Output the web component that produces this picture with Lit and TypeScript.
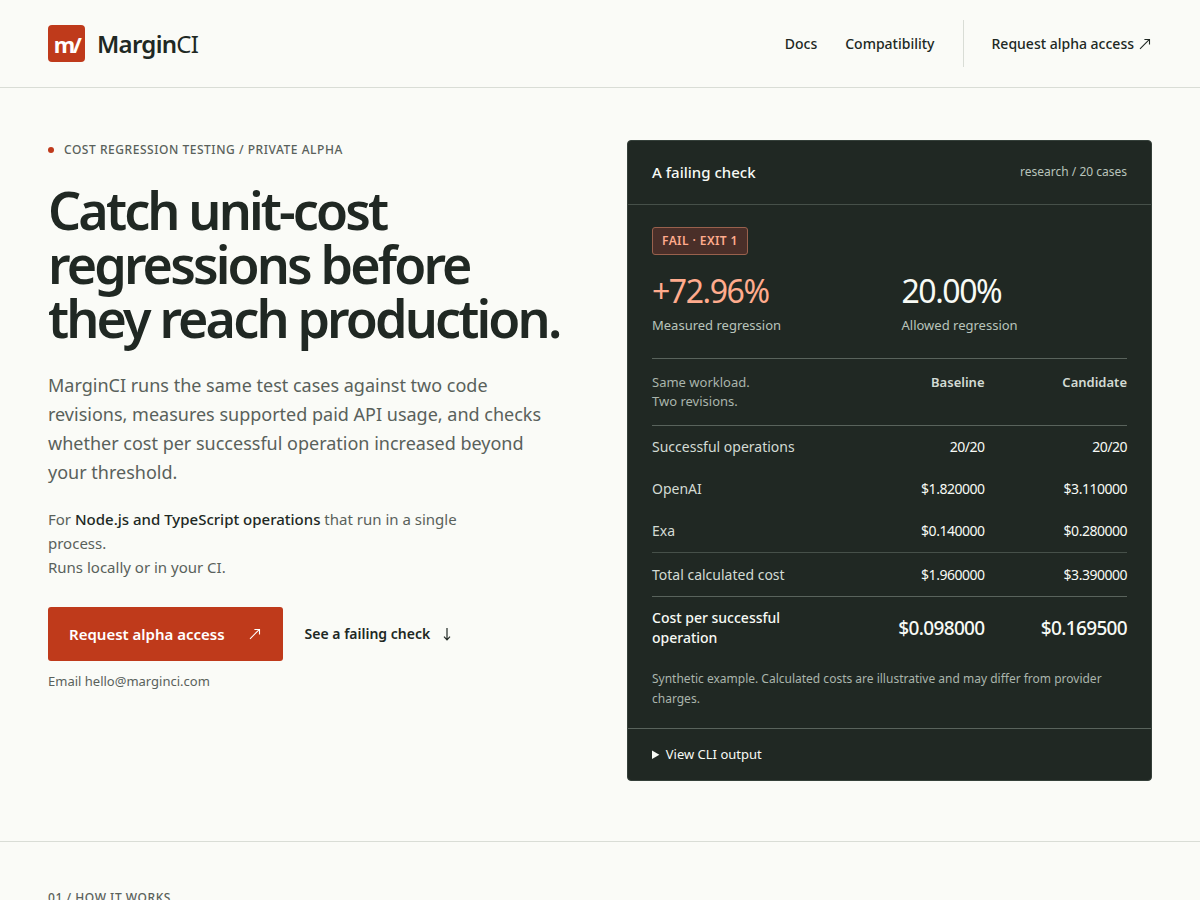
import { LitElement, html, css } from "lit";
import { customElement, property } from "lit/decorators.js";

interface CostRow {
  label: string;
  baseline: string;
  candidate: string;
  kind: "plain" | "total" | "result";
}

const arrowOut = html`
  <svg class="arrow" width="13" height="12" viewBox="0 0 13 12" fill="none" stroke="currentColor" stroke-width="1.1" aria-hidden="true">
    <path d="M1 10.8 L10.4 1.4 M5.4 1.5 H10.5 V6.6" />
  </svg>
`;

const arrowDown = html`
  <svg class="arrow" width="10" height="14" viewBox="0 0 10 14" fill="none" stroke="currentColor" stroke-width="1.2" aria-hidden="true">
    <path d="M5 1 V12.6 M2 9.6 L5 12.8 L8 9.6" />
  </svg>
`;

@customElement("site-header")
export class SiteHeader extends LitElement {
  static styles = css`
    :host {
      display: block;
      border-bottom: 1px solid #d9ddd6;
    }
    .bar {
      display: flex;
      align-items: center;
      justify-content: space-between;
      padding: 20px 48px;
    }
    a {
      color: inherit;
      text-decoration: none;
    }
    .brand {
      display: flex;
      align-items: center;
      gap: 12px;
      font-size: 24px;
      line-height: 32px;
      letter-spacing: -0.03em;
    }
    .mark {
      display: grid;
      place-items: center;
      width: 37px;
      height: 37px;
      border-radius: 4px;
      background: #bf3a1b;
      color: #fff;
      font-size: 22px;
      font-weight: 700;
      letter-spacing: -0.12em;
    }
    .name {
      font-weight: 600;
    }
    .name span {
      font-weight: 400;
    }
    nav {
      display: flex;
      align-items: center;
      gap: 28px;
      font-size: 14px;
      line-height: 23px;
      font-weight: 500;
    }
    .access {
      display: flex;
      align-items: center;
      gap: 5px;
      padding: 12px 0 12px 28px;
      border-left: 1px solid #d9ddd6;
    }
  `;

  render() {
    return html`
      <header class="bar">
        <a class="brand" href="#top" aria-label="MarginCI home">
          <span class="mark">m/</span>
          <span class="name">Margin<span>CI</span></span>
        </a>
        <nav>
          <a href="#docs">Docs</a>
          <a href="#compatibility">Compatibility</a>
          <a class="access" href="mailto:hello@marginci.com">Request alpha access ${arrowOut}</a>
        </nav>
      </header>
    `;
  }
}

@customElement("hero-copy")
export class HeroCopy extends LitElement {
  static styles = css`
    :host {
      display: block;
    }
    .eyebrow {
      display: flex;
      align-items: center;
      gap: 10px;
      margin: 0;
      color: #59615b;
      font-size: 12px;
      line-height: 20px;
      font-weight: 500;
      letter-spacing: 0.045em;
      text-transform: uppercase;
    }
    .dot {
      width: 6px;
      height: 6px;
      border-radius: 50%;
      background: #bf3a1b;
    }
    h1 {
      margin: 23px 0 0;
      font-size: 52px;
      line-height: 54px;
      font-weight: 600;
      letter-spacing: -0.055em;
    }
    .lede {
      max-width: 510px;
      margin: 26px 0 0;
      color: #59615b;
      font-size: 18px;
      line-height: 29px;
    }
    .scope {
      max-width: 460px;
      margin: 20px 0 0;
      color: #59615b;
      font-size: 15px;
      line-height: 24px;
    }
    .scope strong {
      color: #202823;
      font-weight: 500;
    }
    .actions {
      display: flex;
      align-items: center;
      flex-wrap: wrap;
      gap: 22px;
      margin-top: 28px;
    }
    a {
      color: inherit;
      text-decoration: none;
    }
    .primary {
      display: flex;
      align-items: center;
      gap: 24px;
      padding: 15px 21px;
      border-radius: 3px;
      background: #bf3a1b;
      color: #fff;
      font-size: 15px;
      line-height: 24px;
      font-weight: 600;
    }
    .secondary {
      display: flex;
      align-items: center;
      gap: 12px;
      font-size: 14px;
      line-height: 24px;
      font-weight: 600;
    }
    .email {
      margin: 10px 0 0;
      color: #59615b;
      font-size: 13px;
      line-height: 21px;
    }
  `;

  render() {
    return html`
      <p class="eyebrow"><span class="dot"></span>Cost regression testing / Private alpha</p>
      <h1>Catch unit-cost<br />regressions before<br />they reach production.</h1>
      <p class="lede">
        MarginCI runs the same test cases against two code revisions, measures supported paid API
        usage, and checks whether cost per successful operation increased beyond your threshold.
      </p>
      <p class="scope">
        For <strong>Node.js and TypeScript operations</strong> that run in a single process.<br />
        Runs locally or in your CI.
      </p>
      <div class="actions">
        <a class="primary" href="mailto:hello@marginci.com">Request alpha access ${arrowOut}</a>
        <a class="secondary" href="#check">See a failing check ${arrowDown}</a>
      </div>
      <p class="email">Email <a href="mailto:hello@marginci.com">hello@marginci.com</a></p>
    `;
  }
}

@customElement("check-card")
export class CheckCard extends LitElement {
  @property({ attribute: false }) rows: CostRow[] = [];

  static styles = css`
    :host {
      display: block;
      overflow: hidden;
      border: 1px solid #35403a;
      border-radius: 4px;
      background: #202823;
      color: #f7faf5;
    }
    .head {
      display: flex;
      justify-content: space-between;
      padding: 19px 24px 20px;
      border-bottom: 1px solid #465049;
    }
    h2 {
      margin: 0;
      font-size: 15px;
      line-height: 24px;
      font-weight: 500;
    }
    .suite {
      color: #b9c4bb;
      font-size: 12px;
      line-height: 24px;
    }
    .body {
      padding: 22px 24px 19px;
    }
    .badge {
      display: inline-block;
      padding: 3px 9px;
      border: 1px solid #99614d;
      border-radius: 3px;
      background: #4a2f29;
      color: #ffab8d;
      font-size: 12px;
      line-height: 20px;
      font-weight: 600;
      letter-spacing: 0.035em;
    }
    .metrics {
      display: grid;
      grid-template-columns: 1fr 1fr;
      gap: 24px;
      margin: 17px 0 0;
      padding-bottom: 22px;
    }
    .metric {
      display: flex;
      flex-direction: column-reverse;
      gap: 5px;
    }
    dt {
      color: #b9c4bb;
      font-size: 13px;
      line-height: 21px;
    }
    dd {
      margin: 0;
      font-size: 32px;
      line-height: 38px;
      letter-spacing: -0.045em;
    }
    .bad {
      color: #ffab8d;
    }
    table {
      width: 100%;
      table-layout: fixed;
      border-collapse: collapse;
      font-size: 14px;
      line-height: 20px;
    }
    th,
    td {
      padding: 11px 0;
      text-align: right;
      vertical-align: middle;
    }
    .label {
      width: 40%;
      color: #d3dbd4;
      font-weight: 400;
      text-align: left;
    }
    td {
      letter-spacing: -0.035em;
    }
    thead th {
      padding: 14px 0;
      color: #d3dbd4;
      font-size: 13px;
      line-height: 19px;
      font-weight: 600;
      vertical-align: top;
    }
    thead .label {
      color: #aab5ac;
      font-weight: 400;
    }
    thead tr {
      border-top: 1px solid #59635c;
      border-bottom: 1px solid #59635c;
    }
    .total {
      border-top: 1px solid #465049;
      border-bottom: 1px solid #59635c;
    }
    .total th,
    .total td {
      padding-top: 12px;
    }
    .result .label {
      color: #f7faf5;
      font-weight: 500;
    }
    .result td {
      font-size: 19px;
      font-weight: 500;
    }
    .note {
      margin: 10px 0 0;
      color: #aab5ac;
      font-size: 12px;
      line-height: 20px;
    }
    details {
      border-top: 1px solid #59635c;
      font-size: 13px;
      line-height: 21px;
    }
    summary {
      padding: 15px 24px;
      cursor: pointer;
    }
  `;

  render() {
    return html`
      <div class="head">
        <h2>A failing check</h2>
        <span class="suite">research / 20 cases</span>
      </div>
      <div class="body">
        <span class="badge">FAIL · EXIT 1</span>
        <dl class="metrics">
          <div class="metric">
            <dt>Measured regression</dt>
            <dd class="bad">+72.96%</dd>
          </div>
          <div class="metric">
            <dt>Allowed regression</dt>
            <dd>20.00%</dd>
          </div>
        </dl>
        <table>
          <thead>
            <tr>
              <th class="label" scope="col">Same workload.<br />Two revisions.</th>
              <th scope="col">Baseline</th>
              <th scope="col">Candidate</th>
            </tr>
          </thead>
          <tbody>
            ${this.rows.map(
              (row) => html`
                <tr class=${row.kind}>
                  <th class="label" scope="row">${row.label}</th>
                  <td>${row.baseline}</td>
                  <td>${row.candidate}</td>
                </tr>
              `
            )}
          </tbody>
        </table>
        <p class="note">
          Synthetic example. Calculated costs are illustrative and may differ from provider charges.
        </p>
      </div>
      <details>
        <summary>View CLI output</summary>
      </details>
    `;
  }
}

@customElement("app-root")
export class AppRoot extends LitElement {
  private rows: CostRow[] = [
    { label: "Successful operations", baseline: "20/20", candidate: "20/20", kind: "plain" },
    { label: "OpenAI", baseline: "$1.820000", candidate: "$3.110000", kind: "plain" },
    { label: "Exa", baseline: "$0.140000", candidate: "$0.280000", kind: "plain" },
    { label: "Total calculated cost", baseline: "$1.960000", candidate: "$3.390000", kind: "total" },
    {
      label: "Cost per successful operation",
      baseline: "$0.098000",
      candidate: "$0.169500",
      kind: "result",
    },
  ];

  static styles = css`
    :host {
      display: block;
      min-height: 100vh;
      background: #fafbf7;
      color: #202823;
      font-family: "Noto Sans", sans-serif;
    }
    .hero {
      display: grid;
      grid-template-columns: 1fr 1fr;
      align-items: start;
      gap: 54px;
      padding: 52px 48px 60px;
      border-bottom: 1px solid #d9ddd6;
    }
    .how {
      padding: 46px 48px;
    }
    .kicker {
      margin: 0;
      color: #59615b;
      font-size: 12px;
      line-height: 20px;
      font-weight: 500;
      letter-spacing: 0.045em;
      text-transform: uppercase;
    }
    @media (max-width: 900px) {
      .hero {
        grid-template-columns: 1fr;
      }
    }
  `;

  render() {
    return html`
      <site-header></site-header>
      <main>
        <section class="hero">
          <hero-copy></hero-copy>
          <check-card id="check" .rows=${this.rows}></check-card>
        </section>
        <section class="how">
          <p class="kicker">01 / How it works</p>
        </section>
      </main>
    `;
  }
}
